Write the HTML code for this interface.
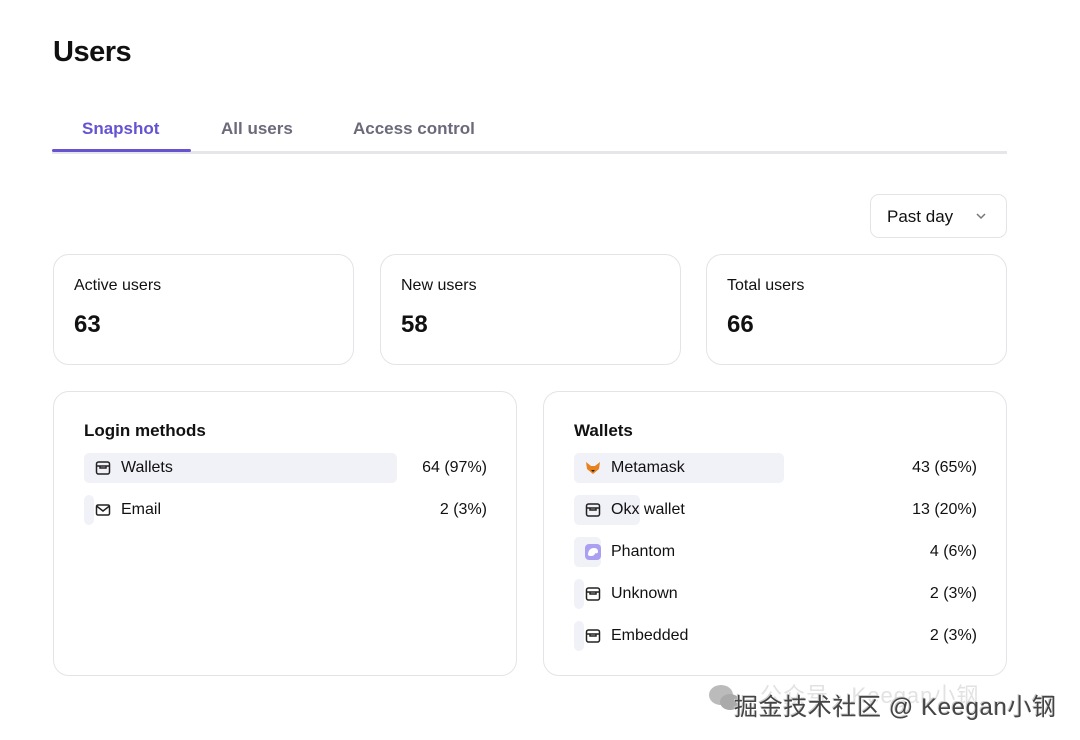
<!DOCTYPE html>
<html><head><meta charset="utf-8"><style>
*{box-sizing:border-box;margin:0;padding:0}
body{width:1080px;height:740px;background:#fff;font-family:"Liberation Sans",Arial,sans-serif;color:#111;position:relative;overflow:hidden}
.abs{position:absolute}
h1{position:absolute;left:53px;top:36px;font-size:29px;font-weight:700;letter-spacing:-0.5px}
.tab{position:absolute;top:119px;font-size:17px;font-weight:700;color:#6b6a7a}
.card{position:absolute;border:1px solid #e4e4e8;border-radius:16px;background:#fff}
.lbl{position:absolute;left:20px;top:22px;font-size:16px}
.num{position:absolute;left:20px;top:56px;font-size:24px;font-weight:700}
.row{position:absolute;height:30px;font-size:16px}
.bar{position:absolute;top:0;height:30px;background:#f1f1f8;border-radius:5px}
.row .t{position:absolute;left:37px;top:6px}
.row svg{position:absolute;left:11px;top:8px}
.row .v{position:absolute;top:6px;right:0;text-align:right}
</style></head><body>
<h1>Users</h1>
<div class="tab" style="left:82px;color:#6553d2">Snapshot</div>
<div class="tab" style="left:221px">All users</div>
<div class="tab" style="left:353px">Access control</div>
<div class="abs" style="left:52px;top:151px;width:955px;height:3px;background:#e6e6ea"></div>
<div class="abs" style="left:52px;top:149px;width:139px;height:3px;background:#6553d2;border-radius:2px"></div>

<div class="abs" style="left:870px;top:194px;width:137px;height:44px;border:1px solid #e4e4e8;border-radius:9px">
<span class="abs" style="left:16px;top:12px;font-size:17px">Past day</span>
<svg class="abs" style="left:104px;top:16px" width="12" height="10" viewBox="0 0 12 10"><path d="M2 3l4 4 4-4" fill="none" stroke="#777" stroke-width="1.5"/></svg>
</div>

<div class="card" style="left:53px;top:254px;width:301px;height:111px"><div class="lbl">Active users</div><div class="num">63</div></div>
<div class="card" style="left:380px;top:254px;width:301px;height:111px"><div class="lbl">New users</div><div class="num">58</div></div>
<div class="card" style="left:706px;top:254px;width:301px;height:111px"><div class="lbl">Total users</div><div class="num">66</div></div>

<div class="card" style="left:53px;top:391px;width:464px;height:285px">
<div class="abs" style="left:30px;top:29px;font-size:17px;font-weight:700">Login methods</div>
<div class="row" style="left:30px;top:61px;width:403px"><div class="bar" style="left:0;width:313px"></div>
<svg width="16" height="14" viewBox="0 0 16 14"><rect x="1.5" y="1" width="13" height="12" rx="2" fill="none" stroke="#222" stroke-width="1.5"/><path d="M1.5 5h13M5 5v2h6V5" fill="none" stroke="#222" stroke-width="1.5"/></svg><span class="t">Wallets</span><span class="v">64 (97%)</span></div>
<div class="row" style="left:30px;top:103px;width:403px"><div class="bar" style="left:0;width:10px"></div>
<svg width="16" height="14" viewBox="0 0 16 14"><rect x="1.5" y="2" width="13" height="10" rx="1.5" fill="none" stroke="#222" stroke-width="1.5"/><path d="M1.5 3l6.5 5 6.5-5" fill="none" stroke="#222" stroke-width="1.5"/></svg><span class="t">Email</span><span class="v">2 (3%)</span></div>
</div>

<div class="card" style="left:543px;top:391px;width:464px;height:285px">
<div class="abs" style="left:30px;top:29px;font-size:17px;font-weight:700">Wallets</div>
<div class="row" style="left:30px;top:61px;width:403px"><div class="bar" style="left:0;width:210px"></div>
<svg width="16" height="14" viewBox="0 0 16 14"><path d="M1 1l5 4h4l5-4-1 7-6 5-6-5z" fill="#e8821e"/><path d="M6 9h4l-2 2z" fill="#222"/></svg><span class="t">Metamask</span><span class="v">43 (65%)</span></div>
<div class="row" style="left:30px;top:103px;width:403px"><div class="bar" style="left:0;width:66px"></div>
<svg width="16" height="14" viewBox="0 0 16 14"><rect x="1.5" y="1" width="13" height="12" rx="2" fill="none" stroke="#222" stroke-width="1.5"/><path d="M1.5 5h13M5 5v2h6V5" fill="none" stroke="#222" stroke-width="1.5"/></svg><span class="t">Okx wallet</span><span class="v">13 (20%)</span></div>
<div class="row" style="left:30px;top:145px;width:403px"><div class="bar" style="left:0;width:27px"></div>
<svg width="16" height="16" viewBox="0 0 16 16" style="top:7px"><rect width="16" height="16" rx="4" fill="#ab9ff2"/><path d="M3 11c0-4 2-7 6-7s4 3 4 4-2 2-3 1c0 2-2 3-4 3-1 0-2 0-3-1z" fill="#fff"/></svg><span class="t">Phantom</span><span class="v">4 (6%)</span></div>
<div class="row" style="left:30px;top:187px;width:403px"><div class="bar" style="left:0;width:10px"></div>
<svg width="16" height="14" viewBox="0 0 16 14"><rect x="1.5" y="1" width="13" height="12" rx="2" fill="none" stroke="#222" stroke-width="1.5"/><path d="M1.5 5h13M5 5v2h6V5" fill="none" stroke="#222" stroke-width="1.5"/></svg><span class="t">Unknown</span><span class="v">2 (3%)</span></div>
<div class="row" style="left:30px;top:229px;width:403px"><div class="bar" style="left:0;width:10px"></div>
<svg width="16" height="14" viewBox="0 0 16 14"><rect x="1.5" y="1" width="13" height="12" rx="2" fill="none" stroke="#222" stroke-width="1.5"/><path d="M1.5 5h13M5 5v2h6V5" fill="none" stroke="#222" stroke-width="1.5"/></svg><span class="t">Embedded</span><span class="v">2 (3%)</span></div>
</div>

<div class="abs" style="left:760px;top:678px;font-size:22px;color:#e2e2e2;font-family:'Liberation Sans','Noto Sans CJK SC',sans-serif;letter-spacing:1px">公众号 · Keegan小钢</div>
<svg class="abs" style="left:708px;top:683px" width="34" height="30" viewBox="0 0 34 30"><ellipse cx="13" cy="12" rx="12" ry="10" fill="#bbb"/><ellipse cx="22" cy="19" rx="10" ry="8" fill="#aaa"/></svg>
<div class="abs" style="left:734px;top:687px;font-size:24px;letter-spacing:0.6px;color:#444;font-family:'Liberation Sans','Noto Sans CJK SC',sans-serif;text-shadow:1px 1px 0 #fff,-1px -1px 0 #ccc">掘金技术社区 @ Keegan小钢</div>
</body></html>
